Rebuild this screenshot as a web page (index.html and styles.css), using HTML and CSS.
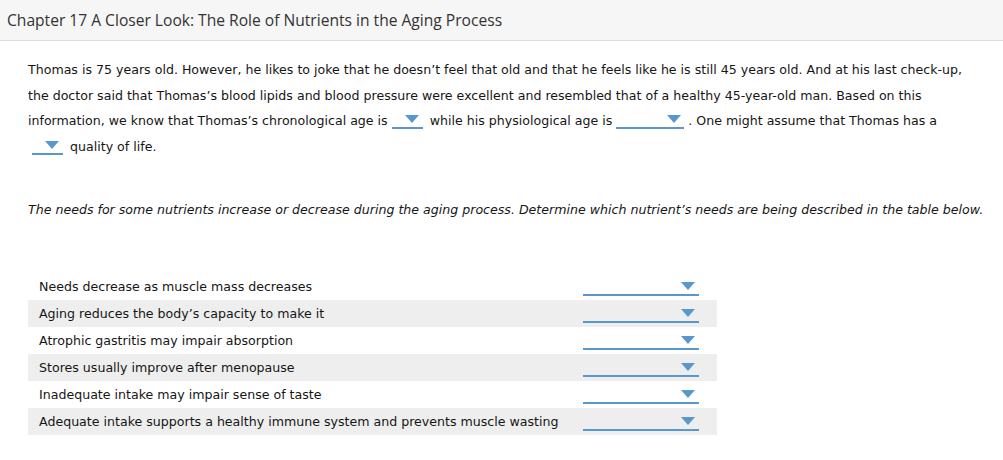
FILE: index.html
```html
<!DOCTYPE html>
<html lang="en">
<head>
    <meta charset="UTF-8">
    <title>Chapter 17 A Closer Look</title>
    <link rel="stylesheet" href="styles.css">
</head>
<body>
    <!-- Title bar -->
    <div class="title-bar">
        <h1>Chapter 17 A Closer Look: The Role of Nutrients in the Aging Process</h1>
    </div>

    <div class="content">
        <p class="story">Thomas is 75 years old. However, he likes to joke that he doesn’t feel that old and that he feels like he is still 45 years old. And at his last check-up, the doctor said that Thomas’s blood lipids and blood pressure were excellent and resembled that of a healthy 45-year-old man. Based on this information, we know that Thomas’s chronological age is <span class="drop drop-sm"><span class="arrow"></span></span> while his physiological age is <span class="drop drop-md"><span class="arrow"></span></span> . One might assume that Thomas has a <span class="drop drop-sm first"><span class="arrow"></span></span> quality of life.</p>

        <p class="prompt">The needs for some nutrients increase or decrease during the aging process. Determine which nutrient’s needs are being described in the table below.</p>

        <!-- Matching table -->
        <div class="match-table">
            <div class="match-row">
                <span class="label">Needs decrease as muscle mass decreases</span>
                <span class="drop drop-lg"><span class="arrow"></span></span>
            </div>
            <div class="match-row">
                <span class="label">Aging reduces the body’s capacity to make it</span>
                <span class="drop drop-lg"><span class="arrow"></span></span>
            </div>
            <div class="match-row">
                <span class="label">Atrophic gastritis may impair absorption</span>
                <span class="drop drop-lg"><span class="arrow"></span></span>
            </div>
            <div class="match-row">
                <span class="label">Stores usually improve after menopause</span>
                <span class="drop drop-lg"><span class="arrow"></span></span>
            </div>
            <div class="match-row">
                <span class="label">Inadequate intake may impair sense of taste</span>
                <span class="drop drop-lg"><span class="arrow"></span></span>
            </div>
            <div class="match-row">
                <span class="label">Adequate intake supports a healthy immune system and prevents muscle wasting</span>
                <span class="drop drop-lg"><span class="arrow"></span></span>
            </div>
        </div>
    </div>
</body>
</html>
```

FILE: styles.css
```css
body {
    margin: 0;
    padding: 0;
    background-color: #fff;
    font-family: 'DejaVu Sans', Verdana, sans-serif;
    color: #161616;
}

/* Title bar */
.title-bar {
    background-color: #f6f6f6;
    border-bottom: 1px solid #dcdcdc;
    height: 40px;
    display: flex;
    align-items: center;
    padding-left: 7px;
}

.title-bar h1 {
    margin: 0;
    font-family: 'Open Sans', sans-serif;
    font-weight: 400;
    font-size: 15.6px;
    color: #333;
}

.content {
    padding: 16px 10px 0 28px;
}

.story {
    margin: 0;
    max-width: 950px;
    font-size: 12.6px;
    line-height: 25.5px;
}

.prompt {
    margin: 38px 0 0 0;
    font-size: 12.6px;
    font-style: italic;
    line-height: 25px;
    white-space: nowrap;
}

/* Dropdown blanks */
.drop {
    display: inline-block;
    height: 13px;
    border-bottom: 2px solid #5a97cc;
    vertical-align: -4px;
}

.drop .arrow {
    display: block;
    width: 0;
    height: 0;
    margin-left: auto;
    margin-top: 1px;
    border-left: 7.5px solid transparent;
    border-right: 7.5px solid transparent;
    border-top: 8px solid #5a97cc;
}

.drop-sm {
    width: 31px;
    margin-right: 3px;
}

.drop-sm .arrow {
    margin-right: 4px;
}

.drop-sm.first {
    margin-left: 4px;
}

.drop-md {
    width: 68px;
}

.drop-md .arrow {
    margin-right: 3px;
}

.drop-lg {
    width: 116px;
    vertical-align: baseline;
}

.drop-lg .arrow {
    margin-right: 4px;
}

/* Matching table */
.match-table {
    margin-top: 51px;
    width: 689px;
}

.match-row {
    display: flex;
    align-items: flex-end;
    justify-content: space-between;
    height: 27px;
    padding: 0 18px 4px 11px;
    box-sizing: border-box;
    font-size: 12.6px;
}

.match-row:nth-child(even) {
    background-color: #eeeeee;
}

.match-row .label {
    align-self: center;
    padding-top: 4px;
}
```
